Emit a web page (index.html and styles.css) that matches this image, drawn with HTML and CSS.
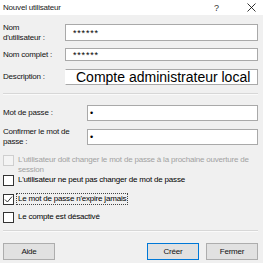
FILE: index.html
```html
<!DOCTYPE html>
<html lang="fr">
<head>
    <meta charset="UTF-8">
    <title>Nouvel utilisateur</title>
    <link rel="stylesheet" href="styles.css">
</head>
<body>

<div class="dialog">
    <div class="titlebar">
        <span class="title">Nouvel utilisateur</span>
        <span class="help">?</span>
        <span class="close">
            <svg width="9" height="9" viewBox="0 0 9 9"><path d="M0.5 0.5 L8.5 8.5 M8.5 0.5 L0.5 8.5" stroke="#000" stroke-width="0.8" fill="none"/></svg>
        </span>
    </div>

    <div class="content">
        <div class="row row-user">
            <label class="lbl">Nom d'utilisateur :</label>
            <div class="field field-user">******</div>
        </div>
        <div class="row row-full">
            <label class="lbl">Nom complet :</label>
            <div class="field field-full">******</div>
        </div>
        <div class="row row-desc">
            <label class="lbl">Description :</label>
            <div class="field field-desc">Compte administrateur local</div>
        </div>

        <div class="sep sep-top"></div>

        <div class="row row-pwd">
            <label class="lbl lbl-wide">Mot de passe :</label>
            <div class="field field-pwd">&bull;</div>
        </div>
        <div class="row row-confirm">
            <label class="lbl lbl-wide">Confirmer le mot de passe :</label>
            <div class="field field-pwd">&bull;</div>
        </div>

        <div class="check check-first disabled">
            <span class="box"></span>
            <span class="check-text">L'utilisateur doit changer le mot de passe à la prochaine ouverture de session</span>
        </div>
        <div class="check check-second">
            <span class="box"></span>
            <span class="check-text">L'utilisateur ne peut pas changer de mot de passe</span>
        </div>
        <div class="check check-third">
            <span class="box checked">
                <svg width="9" height="9" viewBox="0 0 9 9"><path d="M1 4.6 L3.4 7 L8 1.6" stroke="#333" stroke-width="1" fill="none"/></svg>
            </span>
            <span class="check-text focused">Le mot de passe n'expire jamais</span>
        </div>
        <div class="check check-fourth">
            <span class="box"></span>
            <span class="check-text">Le compte est désactivé</span>
        </div>

        <div class="sep sep-bottom"></div>

        <div class="buttons">
            <button class="btn">Aide</button>
            <span class="spacer"></span>
            <button class="btn btn-default">Créer</button>
            <button class="btn">Fermer</button>
        </div>
    </div>
</div>

</body>
</html>
```

FILE: styles.css
```css
body {
    margin: 0;
    padding: 0;
    background-color: #f0f0f0;
    font-family: "Liberation Sans", Arial, sans-serif;
    font-size: 8px;
    letter-spacing: -0.2px;
    color: #000;
}
.dialog {
    width: 263px;
    height: 263px;
    overflow: hidden;
}
.titlebar {
    height: 15px;
    background-color: #fff;
    display: flex;
    align-items: center;
    padding-left: 3px;
}
.title {
    flex: 1;
    color: #222;
}
.help {
    width: 33px;
    font-size: 9px;
    color: #333;
}
.close {
    width: 16px;
    display: flex;
    align-items: center;
}
.content {
    padding: 0 5px 0 3px;
}
.row {
    display: flex;
    align-items: center;
}
.lbl {
    width: 50px;
    margin-right: 12px;
    line-height: 10px;
    color: #111;
}
.lbl-wide {
    width: 80px;
    margin-right: 4px;
}
.field {
    flex: 1;
    background-color: #fff;
    border: 1px solid #a9a9a9;
    box-sizing: border-box;
    display: flex;
    align-items: center;
    padding-left: 7px;
    font-size: 9px;
    letter-spacing: 0.8px;
}
.row-user {
    margin-top: 7px;
    height: 21px;
}
.field-user {
    height: 17px;
}
.row-full {
    margin-top: 3px;
    height: 17px;
}
.field-full {
    height: 13px;
}
.row-desc {
    margin-top: 6px;
    height: 16px;
}
.field-desc {
    height: 16px;
    padding-left: 10px;
    font-size: 14px;
    letter-spacing: 0;
    border-left-color: #fff;
}
.sep {
    height: 1px;
    background-color: #d7d7d7;
    border-bottom: 1px solid #fafafa;
}
.sep-top {
    margin-top: 8px;
}
.row-pwd {
    margin-top: 10px;
    height: 16px;
}
.row-confirm {
    margin-top: 5px;
    height: 21px;
}
.field-pwd {
    height: 16px;
    padding-left: 2px;
    font-size: 9px;
}
.check {
    display: flex;
    align-items: flex-start;
    line-height: 9.5px;
}
.box {
    width: 11px;
    height: 11px;
    box-sizing: border-box;
    border: 1px solid #333;
    background-color: #fff;
    margin-right: 2px;
    flex-shrink: 0;
    display: flex;
    align-items: center;
    justify-content: center;
}
.check-text {
    padding: 0 1px;
    border: 1px dotted transparent;
    margin-top: -1px;
}
.focused {
    border-color: #444;
}
.disabled .box {
    border-color: #cfcfcf;
    background-color: #f4f4f4;
}
.disabled .check-text {
    color: #a2a2a2;
}
.check-first {
    margin-top: 8px;
}
.check-second {
    margin-top: 0;
}
.check-third {
    margin-top: 8px;
}
.check-fourth {
    margin-top: 7px;
}
.sep-bottom {
    margin-top: 7px;
}
.buttons {
    display: flex;
    margin-top: 11px;
    gap: 7px;
}
.spacer {
    flex: 1;
}
.btn {
    width: 52px;
    height: 17px;
    padding: 0;
    background-color: #e1e1e1;
    border: 1px solid #adadad;
    font-family: "Liberation Sans", Arial, sans-serif;
    font-size: 8px;
    letter-spacing: -0.2px;
    color: #111;
}
.btn-default {
    border-color: #0078d7;
}
```
